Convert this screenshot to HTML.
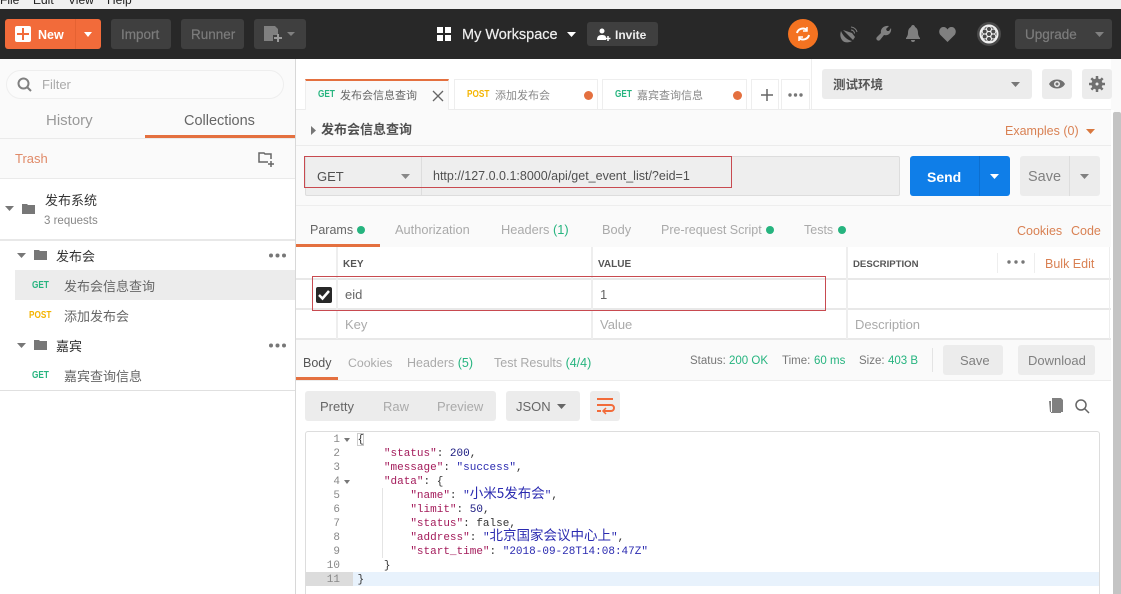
<!DOCTYPE html>
<html><head><meta charset="utf-8">
<style>
html,body{margin:0;padding:0;width:1121px;height:594px;overflow:hidden;background:#fafafa}
body{position:relative;font-family:"Liberation Sans","Noto Sans CJK SC",sans-serif;font-size:13px;color:#808080}
.b,.t{position:absolute}
.t{white-space:nowrap;line-height:16px}
.btn{position:absolute;background:#3f3f3f;border-radius:3px}
.g{color:#26b47f}.o{color:#d98153}.y{color:#f4b400}
.m{font-weight:bold;font-size:10px;transform:scaleX(.82);transform-origin:0 50%}
svg{position:absolute;overflow:visible}
.mono{font-family:"Liberation Mono","Noto Sans CJK SC",monospace;font-size:11px;line-height:14px;position:absolute;white-space:pre;color:#333}
.k{color:#a31a5a}.s{color:#2a2ab0}.n{color:#1a1a80}
.c{font-size:13.5px;line-height:0;font-family:"Noto Sans CJK SC",sans-serif}
</style></head><body>
<!-- menu -->
<div class="b" style="left:0;top:0;width:1121px;height:9px;background:#f0f0f0;overflow:hidden">
<span class="t" style="left:0;top:-8px;color:#222;font-size:12px">File</span>
<span class="t" style="left:33px;top:-8px;color:#222;font-size:12px">Edit</span>
<span class="t" style="left:68px;top:-8px;color:#222;font-size:12px">View</span>
<span class="t" style="left:107px;top:-8px;color:#222;font-size:12px">Help</span>
</div>
<!-- header -->
<div class="b" style="left:0;top:9px;width:1121px;height:50px;background:#282828"></div>
<div class="b" style="left:5px;top:19px;width:96px;height:30px;background:#f26b3a;border-radius:3px"></div>
<div class="b" style="left:75px;top:19px;width:1px;height:30px;background:#e56232"></div>
<div class="b" style="left:15px;top:26px;width:16px;height:16px;background:#fff;border-radius:2px"></div>
<div class="b" style="left:22px;top:28px;width:2px;height:12px;background:#f26b3a"></div>
<div class="b" style="left:17px;top:33px;width:12px;height:2px;background:#f26b3a"></div>
<span class="t" style="left:38px;top:27px;color:#fff;font-weight:bold;font-size:12.5px">New</span>
<svg style="left:83px;top:32px" width="10" height="6"><path d="M1 0h8l-4 5z" fill="#fff"/></svg>
<div class="btn" style="left:111px;top:19px;width:60px;height:30px"></div>
<span class="t" style="left:121px;top:27px;color:#7c7c7c;font-size:13.5px;-webkit-text-stroke:.2px #7c7c7c">Import</span>
<div class="btn" style="left:181px;top:19px;width:63px;height:30px"></div>
<span class="t" style="left:191px;top:27px;color:#7c7c7c;font-size:13.5px;-webkit-text-stroke:.2px #7c7c7c">Runner</span>
<div class="btn" style="left:254px;top:19px;width:52px;height:30px"></div>
<svg style="left:264px;top:26px" width="36" height="16"><path d="M0 0h11l3 3v6h-5v6H0z" fill="#808080"/><path d="M10 12h8M14 8v8" stroke="#9a9a9a" stroke-width="2"/><path d="M23 6h8l-4 4z" fill="#808080"/></svg>
<svg style="left:437px;top:27px" width="15" height="15"><path d="M0 0h6v6H0zM8 0h6v6H8zM0 8h6v6H0zM8 8h6v6H8z" fill="#fff"/></svg>
<span class="t" style="left:462px;top:27px;color:#eee;font-size:14.5px;-webkit-text-stroke:.2px #eee">My Workspace</span>
<svg style="left:567px;top:32px" width="9" height="5"><path d="M0 0h9l-4.500 5z" fill="#fff"/></svg>
<div class="btn" style="left:587px;top:22px;width:71px;height:24px"></div>
<svg style="left:597px;top:28px" width="13" height="14"><circle cx="5" cy="3" r="2.500" fill="#fff"/><path d="M0 12c0-4 2-5 5-5s4 1 4 3v2z" fill="#fff"/><path d="M8.500 10.500h5M11 8v5" stroke="#fff" stroke-width="1.500"/></svg>
<span class="t" style="left:615px;top:27px;color:#eee;font-size:12px;font-weight:bold">Invite</span>
<div class="b" style="left:788px;top:19px;width:30px;height:30px;background:#f47321;border-radius:50%"></div>
<svg style="left:795px;top:27px" width="16" height="14" fill="none" stroke="#fff" stroke-width="2"><path d="M2 6a6 5.500 0 0 1 10-3M14 8a6 5.500 0 0 1-10 3"/><path d="M12 0v4H8M4 14v-4h4" stroke-width="1.500"/></svg>
<svg style="left:840px;top:26px" width="18" height="17"><path d="M1 5c2 5 6 9 11 10-3 2-8 2-10-1-2-3-2-6-1-9z" fill="#808080"/><path d="M3 4l10 10 2-3-3-4z" fill="#808080"/><path d="M11 4a3.500 3.500 0 0 1 3.500 3.500M11 1a6.500 6.500 0 0 1 6 5" stroke="#808080" fill="none"/></svg>
<svg style="left:875px;top:26px" width="17" height="16"><path d="M16 2c1 5-3 8-7 7l-4 5c-2 2-5-1-3-3l4-4C5 3 9-1 14 0l-3 3 1 2 2 0z" fill="#808080"/></svg>
<svg style="left:906px;top:25px" width="14" height="17"><path d="M7 0c1 0 2 1 2 2 2 1 3 3 3 6 0 2 1 4 2 5v1H0v-1c1-1 2-3 2-5 0-3 1-5 3-6 0-1 1-2 2-2zM5 15h4a2 2 0 0 1-4 0z" fill="#808080"/></svg>
<svg style="left:939px;top:27px" width="17" height="15"><path d="M8.500 15L1 7.500C-1 4 1 0 4.500 0c2 0 3.200 1 4 2.500C9.300 1 10.500 0 12.500 0 16 0 18 4 16 7.500z" fill="#808080"/></svg>
<svg style="left:977px;top:22px" width="24" height="24" fill="none" stroke="#f0f0f0"><circle cx="12" cy="12" r="12" fill="#4a4a4a" stroke="none"/><circle cx="12" cy="12" r="8.500" stroke-width="2"/><circle cx="12" cy="12" r="2.500"/><circle cx="12" cy="7" r="2.500"/><circle cx="12" cy="17" r="2.500"/><circle cx="7.700" cy="9.500" r="2.500"/><circle cx="16.300" cy="9.500" r="2.500"/><circle cx="7.700" cy="14.500" r="2.500"/><circle cx="16.300" cy="14.500" r="2.500"/></svg>
<div class="btn" style="left:1015px;top:19px;width:97px;height:30px"></div>
<span class="t" style="left:1025px;top:27px;color:#7c7c7c;font-size:13.5px;-webkit-text-stroke:.2px #7c7c7c">Upgrade</span>
<svg style="left:1095px;top:32px" width="9" height="5"><path d="M0 0h9l-4.500 5z" fill="#808080"/></svg>

<!-- sidebar -->
<div class="b" style="left:0;top:59px;width:295px;height:535px;background:#fff"></div>
<div class="b" style="left:0;top:59px;width:295px;height:120px;background:#fafafa"></div>
<div class="b" style="left:295px;top:59px;width:1px;height:535px;background:#d8d8d8"></div>
<div class="b" style="left:6px;top:70px;width:276px;height:27px;border:1px solid #eee;border-radius:15px;background:#fbfbfb"></div>
<svg style="left:17px;top:77px" width="15" height="15" fill="none" stroke="#808080" stroke-width="2"><circle cx="6.500" cy="6.500" r="5"/><path d="M10 10l4 4"/></svg>
<span class="t" style="left:42px;top:77px;color:#aaa">Filter</span>
<span class="t" style="left:46px;top:113px;color:#999;font-size:15px">History</span>
<span class="t" style="left:184px;top:113px;color:#666;font-size:14.5px">Collections</span>
<div class="b" style="left:0;top:138px;width:295px;height:1px;background:#eaeaea"></div>
<div class="b" style="left:145px;top:135px;width:150px;height:3px;background:#e4703f"></div>
<span class="t" style="left:15px;top:151px;color:#e08a68">Trash</span>
<svg style="left:258px;top:152px" width="16" height="15" fill="none" stroke="#666" stroke-width="1.500"><path d="M10 10H1V1h5l1 1h6v5"/><path d="M10 12h6M13 9v6" stroke-width="1.500"/></svg>
<div class="b" style="left:0;top:178px;width:295px;height:1px;background:#eaeaea"></div>
<svg style="left:5px;top:206px" width="9" height="6"><path d="M0 0h9l-4.500 5z" fill="#777"/></svg>
<svg style="left:22px;top:204px" width="13" height="10"><path d="M0 0h5l1 1h7v9H0z" fill="#777"/></svg>
<span class="t" style="left:45px;top:193px;color:#333;font-size:13px">发布系统</span>
<span class="t" style="left:44px;top:213px;color:#888;font-size:11.500px">3 requests</span>
<div class="b" style="left:0;top:239px;width:295px;height:2px;background:#e8e8e8"></div>
<svg style="left:17px;top:253px" width="9" height="6"><path d="M0 0h9l-4.500 5z" fill="#777"/></svg>
<svg style="left:34px;top:250px" width="13" height="10"><path d="M0 0h5l1 1h7v9H0z" fill="#777"/></svg>
<span class="t" style="left:56px;top:249px;color:#333">发布会</span>
<svg style="left:269px;top:253px" width="17" height="5"><g fill="#777"><circle cx="2" cy="2.500" r="2"/><circle cx="8.500" cy="2.500" r="2"/><circle cx="15" cy="2.500" r="2"/></g></svg>
<div class="b" style="left:15px;top:270px;width:280px;height:30px;background:#ececec"></div>
<span class="t m g" style="left:32px;top:278px">GET</span>
<span class="t" style="left:64px;top:279px;color:#666">发布会信息查询</span>
<span class="t m y" style="left:29px;top:308px">POST</span>
<span class="t" style="left:64px;top:309px;color:#666">添加发布会</span>
<svg style="left:17px;top:343px" width="9" height="6"><path d="M0 0h9l-4.500 5z" fill="#777"/></svg>
<svg style="left:34px;top:340px" width="13" height="10"><path d="M0 0h5l1 1h7v9H0z" fill="#777"/></svg>
<span class="t" style="left:56px;top:339px;color:#333">嘉宾</span>
<svg style="left:269px;top:343px" width="17" height="5"><g fill="#777"><circle cx="2" cy="2.500" r="2"/><circle cx="8.500" cy="2.500" r="2"/><circle cx="15" cy="2.500" r="2"/></g></svg>
<span class="t m g" style="left:32px;top:368px">GET</span>
<span class="t" style="left:64px;top:369px;color:#666">嘉宾查询信息</span>
<div class="b" style="left:0;top:390px;width:295px;height:1px;background:#e0e0e0"></div>

<!-- main -->
<div class="b" style="left:296px;top:59px;width:815px;height:50px;background:#fff"></div>
<div class="b" style="left:296px;top:109px;width:815px;height:1px;background:#ececec"></div>
<!-- tabs -->
<div class="b" style="left:305px;top:79px;width:144px;height:31px;background:#fafafa;border:1px solid #eee;border-top:2px solid #e4703f;border-bottom:none;box-sizing:border-box"></div>
<span class="t m g" style="left:318px;top:87px">GET</span>
<span class="t" style="left:340px;top:88px;font-size:11px;color:#666">发布会信息查询</span>
<svg style="left:433px;top:91px" width="10" height="10" stroke="#666" stroke-width="1.300"><path d="M0 0l10 10M10 0L0 10"/></svg>
<div class="b" style="left:454px;top:79px;width:144px;height:30px;border:1px solid #eee;border-bottom:none;box-sizing:border-box"></div>
<span class="t m y" style="left:467px;top:87px">POST</span>
<span class="t" style="left:495px;top:88px;font-size:11px;color:#888">添加发布会</span>
<div class="b" style="left:584px;top:91px;width:9px;height:9px;border-radius:50%;background:#e4703f"></div>
<div class="b" style="left:602px;top:79px;width:145px;height:30px;border:1px solid #eee;border-bottom:none;box-sizing:border-box"></div>
<span class="t m g" style="left:615px;top:87px">GET</span>
<span class="t" style="left:637px;top:88px;font-size:11px;color:#888">嘉宾查询信息</span>
<div class="b" style="left:733px;top:91px;width:9px;height:9px;border-radius:50%;background:#e4703f"></div>
<div class="b" style="left:751px;top:79px;width:28px;height:30px;border:1px solid #eee;border-bottom:none;box-sizing:border-box"></div>
<svg style="left:761px;top:89px" width="12" height="12" stroke="#666" stroke-width="1.500"><path d="M0 6h12M6 0v12"/></svg>
<div class="b" style="left:781px;top:79px;width:29px;height:30px;border:1px solid #eee;border-bottom:none;box-sizing:border-box"></div>
<svg style="left:788px;top:93px" width="15" height="4"><g fill="#777"><circle cx="2" cy="2" r="1.700"/><circle cx="7.500" cy="2" r="1.700"/><circle cx="13" cy="2" r="1.700"/></g></svg>
<div class="b" style="left:811px;top:59px;width:1px;height:50px;background:#eee"></div>
<div class="b" style="left:822px;top:69px;width:210px;height:30px;background:#ececec;border-radius:3px"></div>
<span class="t" style="left:833px;top:77px;color:#555;font-weight:bold;font-size:12.500px">测试环境</span>
<svg style="left:1011px;top:82px" width="9" height="5"><path d="M0 0h9l-4.500 5z" fill="#777"/></svg>
<div class="b" style="left:1042px;top:69px;width:30px;height:30px;background:#ececec;border-radius:3px"></div>
<svg style="left:1049px;top:79px" width="16" height="10"><path d="M0 5c3-6 13-6 16 0-3 6-13 6-16 0z" fill="#707070"/><circle cx="8" cy="5" r="3" fill="#ececec"/><circle cx="8" cy="5" r="1.500" fill="#707070"/></svg>
<div class="b" style="left:1082px;top:69px;width:30px;height:30px;background:#ececec;border-radius:3px"></div>
<svg style="left:1089px;top:76px" width="16" height="16"><circle cx="8" cy="8" r="3.500" fill="none" stroke="#707070" stroke-width="4"/><path d="M8 0v16M0 8h16M2.300 2.300l11.400 11.400M13.700 2.300L2.300 13.700" stroke="#707070" stroke-width="2.500" stroke-dasharray="3 10"/></svg>

<!-- request title -->
<svg style="left:311px;top:126px" width="5" height="9"><path d="M0 0l5 4.500L0 9z" fill="#777"/></svg>
<span class="t" style="left:321px;top:122px;color:#505050;font-weight:bold;font-size:13px">发布会信息查询</span>
<span class="t" style="left:1005px;top:123px;color:#d98153;font-size:12.500px">Examples (0)</span>
<svg style="left:1086px;top:129px" width="9" height="5"><path d="M0 0h9l-4.500 5z" fill="#d9783f"/></svg>
<div class="b" style="left:296px;top:145px;width:815px;height:1px;background:#ececec"></div>

<!-- url bar -->
<div class="b" style="left:305px;top:156px;width:595px;height:40px;background:#eeeeee;border:1px solid #ddd;box-sizing:border-box;border-radius:2px"></div>
<div class="b" style="left:421px;top:156px;width:1px;height:40px;background:#ddd"></div>
<span class="t" style="left:317px;top:169px;color:#505050;font-size:13px">GET</span>
<svg style="left:401px;top:174px" width="9" height="5"><path d="M0 0h9l-4.500 5z" fill="#888"/></svg>
<span class="t" style="left:433px;top:168px;color:#505050;font-size:12.500px">http://127.0.0.1:8000/api/get_event_list/?eid=1</span>
<div class="b" style="left:304px;top:156px;width:428px;height:32px;border:1px solid #c84a50;box-sizing:border-box"></div>
<div class="b" style="left:910px;top:156px;width:100px;height:40px;background:#0f7ee8;border-radius:3px"></div>
<div class="b" style="left:979px;top:156px;width:1px;height:40px;background:#0c6fd0"></div>
<span class="t" style="left:927px;top:169px;color:#fff;font-weight:bold;font-size:14px">Send</span>
<svg style="left:990px;top:174px" width="9" height="5"><path d="M0 0h9l-4.500 5z" fill="#fff"/></svg>
<div class="b" style="left:1020px;top:156px;width:80px;height:40px;background:#ececec;border-radius:3px"></div>
<div class="b" style="left:1069px;top:156px;width:1px;height:40px;background:#ddd"></div>
<span class="t" style="left:1028px;top:169px;color:#808080;font-size:14.500px">Save</span>
<svg style="left:1080px;top:174px" width="9" height="5"><path d="M0 0h9l-4.500 5z" fill="#808080"/></svg>
<div class="b" style="left:296px;top:205px;width:815px;height:1px;background:#eee"></div>

<!-- params tabs -->
<span class="t" style="left:310px;top:222px;color:#666;font-size:12.500px">Params</span>
<div class="b" style="left:357px;top:226px;width:8px;height:8px;border-radius:50%;background:#26b47f"></div>
<div class="b" style="left:296px;top:244px;width:84px;height:3px;background:#e4703f"></div>
<span class="t" style="left:395px;top:222px;color:#aaa;font-size:12.800px">Authorization</span>
<span class="t" style="left:501px;top:222px;color:#aaa;font-size:12.800px">Headers <span class="g">(1)</span></span>
<span class="t" style="left:602px;top:222px;color:#aaa;font-size:12.800px">Body</span>
<span class="t" style="left:661px;top:222px;color:#aaa;font-size:12.500px">Pre-request Script</span>
<div class="b" style="left:766px;top:226px;width:8px;height:8px;border-radius:50%;background:#26b47f"></div>
<span class="t" style="left:804px;top:222px;color:#aaa;font-size:12.500px">Tests</span>
<div class="b" style="left:838px;top:226px;width:8px;height:8px;border-radius:50%;background:#26b47f"></div>
<span class="t" style="left:1017px;top:223px;color:#d98153;font-size:12.500px">Cookies</span>
<span class="t" style="left:1071px;top:223px;color:#d98153;font-size:12.500px">Code</span>

<!-- table -->
<div class="b" style="left:296px;top:247px;width:815px;height:92px;background:#fff"></div>
<div class="b" style="left:296px;top:278px;width:815px;height:2px;background:#e8e8e8"></div>
<div class="b" style="left:296px;top:308px;width:815px;height:2px;background:#e8e8e8"></div>
<div class="b" style="left:296px;top:338px;width:815px;height:2px;background:#e8e8e8"></div>
<div class="b" style="left:336px;top:247px;width:2px;height:92px;background:#eee"></div>
<div class="b" style="left:591px;top:247px;width:2px;height:92px;background:#eee"></div>
<div class="b" style="left:846px;top:247px;width:2px;height:92px;background:#eee"></div>
<div class="b" style="left:1109px;top:247px;width:1px;height:92px;background:#eee"></div>
<div class="b" style="left:997px;top:253px;width:1px;height:20px;background:#eee"></div>
<div class="b" style="left:1034px;top:253px;width:1px;height:20px;background:#eee"></div>
<span class="t" style="left:343px;top:257px;color:#555;font-size:10px;font-weight:bold">KEY</span>
<span class="t" style="left:598px;top:257px;color:#555;font-size:10px;font-weight:bold">VALUE</span>
<span class="t" style="left:853px;top:257px;color:#555;font-size:9.600px;font-weight:bold">DESCRIPTION</span>
<svg style="left:1007px;top:260px" width="18" height="4"><g fill="#777"><circle cx="2" cy="2" r="1.700"/><circle cx="9" cy="2" r="1.700"/><circle cx="16" cy="2" r="1.700"/></g></svg>
<span class="t" style="left:1045px;top:256px;color:#d98153;font-size:12.500px">Bulk Edit</span>
<div class="b" style="left:316px;top:287px;width:16px;height:16px;background:#282828;border-radius:2px"></div>
<svg style="left:318px;top:290px" width="12" height="10" fill="none" stroke="#fff" stroke-width="2.500"><path d="M1 5l3.500 3.500L11 1"/></svg>
<span class="t" style="left:345px;top:287px;color:#666">eid</span>
<span class="t" style="left:600px;top:287px;color:#666">1</span>
<span class="t" style="left:345px;top:317px;color:#aaa">Key</span>
<span class="t" style="left:600px;top:317px;color:#aaa">Value</span>
<span class="t" style="left:855px;top:317px;color:#aaa">Description</span>
<div class="b" style="left:312px;top:276px;width:514px;height:35px;border:1px solid #c84a50;box-sizing:border-box"></div>

<!-- response tabs -->
<span class="t" style="left:303px;top:355px;color:#555;font-size:12.500px">Body</span>
<div class="b" style="left:296px;top:377px;width:42px;height:3px;background:#e4703f"></div>
<span class="t" style="left:348px;top:355px;color:#aaa;font-size:12.300px">Cookies</span>
<span class="t" style="left:407px;top:355px;color:#aaa;font-size:12.500px">Headers <span class="g">(5)</span></span>
<span class="t" style="left:494px;top:355px;color:#aaa;font-size:12.500px">Test Results <span class="g">(4/4)</span></span>
<span class="t" style="left:690px;top:353px;color:#777;font-size:11.500px">Status:</span><span class="t g" style="left:729px;top:353px;font-size:11.500px">200 OK</span>
<span class="t" style="left:782px;top:353px;color:#777;font-size:11.500px">Time:</span><span class="t g" style="left:814px;top:353px;font-size:11.500px">60 ms</span>
<span class="t" style="left:859px;top:353px;color:#777;font-size:11.500px">Size:</span><span class="t g" style="left:888px;top:353px;font-size:11.500px">403 B</span>
<div class="b" style="left:932px;top:348px;width:1px;height:24px;background:#e4e4e4"></div>
<div class="b" style="left:943px;top:345px;width:60px;height:30px;background:#ececec;border-radius:3px"></div>
<span class="t" style="left:960px;top:353px;color:#808080">Save</span>
<div class="b" style="left:1018px;top:345px;width:77px;height:30px;background:#ececec;border-radius:3px"></div>
<span class="t" style="left:1028px;top:353px;color:#808080">Download</span>
<div class="b" style="left:296px;top:380px;width:815px;height:1px;background:#ececec"></div>

<!-- response toolbar -->
<div class="b" style="left:296px;top:381px;width:815px;height:213px;background:#fff"></div>
<div class="b" style="left:305px;top:391px;width:191px;height:30px;background:#ececec;border-radius:3px"></div>
<span class="t" style="left:320px;top:399px;color:#666">Pretty</span>
<span class="t" style="left:383px;top:399px;color:#aaa">Raw</span>
<span class="t" style="left:437px;top:399px;color:#aaa">Preview</span>
<div class="b" style="left:506px;top:391px;width:74px;height:30px;background:#ececec;border-radius:3px"></div>
<span class="t" style="left:516px;top:399px;color:#666">JSON</span>
<svg style="left:557px;top:404px" width="9" height="5"><path d="M0 0h9l-4.500 5z" fill="#666"/></svg>
<div class="b" style="left:590px;top:391px;width:30px;height:30px;background:#ececec;border-radius:3px"></div>
<svg style="left:596px;top:397px" width="18" height="17" fill="none" stroke="#f26b3a" stroke-width="2"><path d="M1 2h16M1 8h14a3 3 0 0 1 0 6H8M1 14h4"/><path d="M10 11l-3 3 3 3" stroke-width="1.500"/></svg>
<svg style="left:1049px;top:398px" width="15" height="15"><path d="M3 0h9l2 2v12H3z" fill="#808080"/><path d="M0 3h2v12h10v-1H1z" fill="#808080"/></svg>
<svg style="left:1075px;top:399px" width="15" height="15" fill="none" stroke="#666" stroke-width="1.500"><circle cx="6" cy="6" r="5"/><path d="M9.500 9.500l4.500 4.500"/></svg>

<!-- code -->
<div class="b" style="left:305px;top:431px;width:795px;height:163px;border:1px solid #ddd;border-bottom:none;box-sizing:border-box;border-radius:3px 3px 0 0"></div>
<div class="b" style="left:353px;top:572px;width:746px;height:14px;background:#e8f2fc"></div>
<div class="b" style="left:306px;top:572px;width:47px;height:14px;background:#dcdcdc"></div>
<div class="mono" style="left:320px;top:433px;width:20px;text-align:right;color:#888">1
2
3
4
5
6
7
8
9
10
11</div>
<svg style="left:344px;top:438px" width="6" height="4"><path d="M0 0h6l-3 4z" fill="#777"/></svg>
<svg style="left:344px;top:480px" width="6" height="4"><path d="M0 0h6l-3 4z" fill="#777"/></svg>
<div class="b" style="left:382px;top:488px;width:1px;height:70px;background:#e4e4e4"></div>
<div class="b" style="left:357px;top:433px;width:7px;height:13px;border:1px solid #ccc;box-sizing:border-box"></div>
<div class="mono" style="left:357.500px;top:433px">{
    <span class="k">"status"</span>: <span class="n">200</span>,
    <span class="k">"message"</span>: <span class="s">"success"</span>,
    <span class="k">"data"</span>: {
        <span class="k">"name"</span>: <span class="s">"<span class="c">小米5发布会</span>"</span>,
        <span class="k">"limit"</span>: <span class="n">50</span>,
        <span class="k">"status"</span>: false,
        <span class="k">"address"</span>: <span class="s">"<span class="c">北京国家会议中心上</span>"</span>,
        <span class="k">"start_time"</span>: <span class="s">"2018-09-28T14:08:47Z"</span>
    }
}</div>

<!-- scrollbar -->
<div class="b" style="left:1111px;top:110px;width:3px;height:484px;background:#fff"></div>
<div class="b" style="left:1113px;top:112px;width:8px;height:482px;background:#c4c4c4;border-radius:2px 2px 0 0"></div>
</body></html>
